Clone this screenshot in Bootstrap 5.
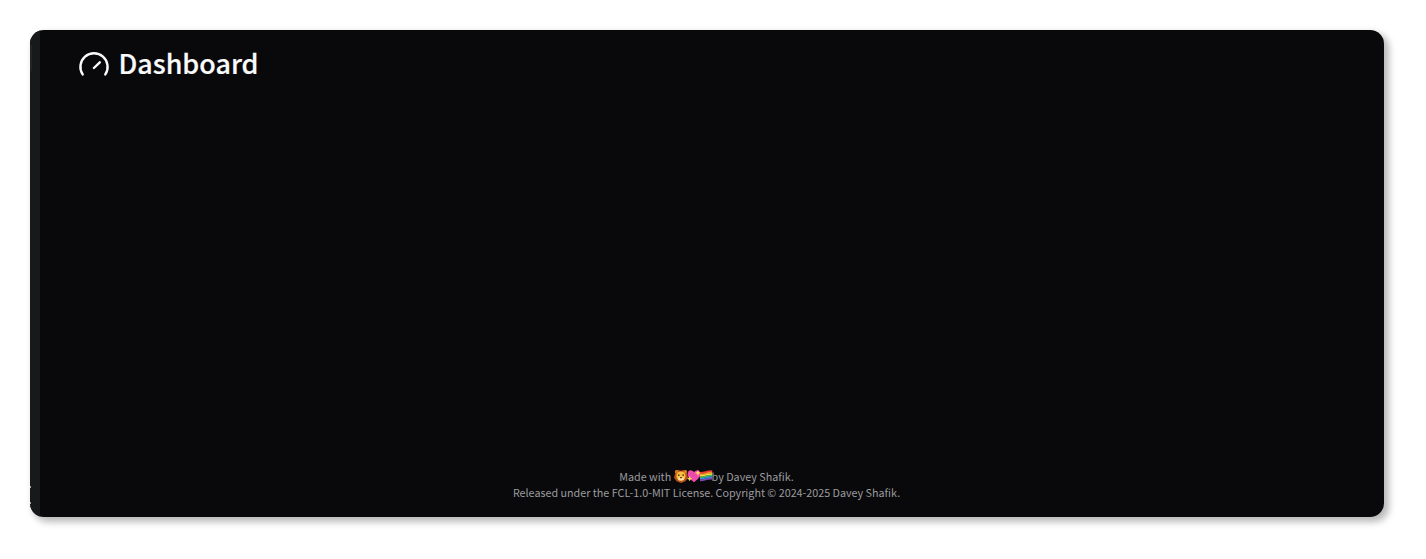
<!DOCTYPE html>
<html lang="en" data-bs-theme="dark">
<head>
<meta charset="utf-8">
<meta name="viewport" content="width=device-width, initial-scale=1">
<title>Dashboard</title>
<link href="https://cdn.jsdelivr.net/npm/bootstrap@5.3.0/dist/css/bootstrap.min.css" rel="stylesheet">
<style>
body{background:#fff;font-family:"Noto Sans CJK SC","Noto Sans",sans-serif;height:559px;padding:30px 42px 42px 30px}
.app-window{background:#09090b;border-radius:14px;box-shadow:4px 4px 7px 1px rgba(0,0,0,.28)}
.side-rail{width:10px;background:#18191b}
.rail-item{width:2px;height:28px;margin-top:14px;background:#222427;border-radius:0 2px 2px 0}
.rail-mark{width:1px;height:2px;background:#aaa}
.page-title{font-size:26.9px;font-weight:500;line-height:36px;color:#fafafa;padding-top:15px;-webkit-text-stroke:.2px #fafafa}
.gauge{width:32px;height:32px;margin-left:38px;margin-right:8.5px}
.page-foot{font-size:10.75px;line-height:16px;color:#9b9b9e;padding:0 11px 16px 0}
.emoji{width:14px;height:14px;vertical-align:-2px;margin-right:-1px}
.emoji-flag{width:13px}
</style>
</head>
<body>
<div class="app-window d-flex h-100 overflow-hidden">
  <aside class="side-rail d-flex flex-column flex-shrink-0">
    <div class="rail-item"></div>
    <div class="rail-mark mt-auto"></div>
    <div class="rail-mark" style="margin-top:14px;margin-bottom:13px"></div>
  </aside>
  <main class="flex-grow-1 d-flex flex-column">
    <h1 class="page-title d-flex align-items-center mb-0">
      <svg class="gauge" viewBox="0 0 32 32" fill="none" stroke="#fafafa" stroke-width="2.4" stroke-linecap="round"><path d="M4.7 27.400A13.6 13.6 0 1 1 27.3 27.400M15.900 21L21.800 15.300"/></svg>
      <span>Dashboard</span>
    </h1>
    <footer class="page-foot mt-auto text-center">
      <div><span>Made with </span><svg class="emoji" viewBox="0 0 16 16"><path d="M2 2l3-1 3 1 3-1 3 1 1 4 1 4-3 4-5 2-5-2-3-4 1-4z" fill="#b65218"/><circle cx="3" cy="3" r="2" fill="#d97a22"/><circle cx="13" cy="3" r="2" fill="#d97a22"/><circle cx="8" cy="8" r="5.2" fill="#fcbd3c"/><ellipse cx="8" cy="11" rx="3.3" ry="2.2" fill="#fbe0a0"/><circle cx="5.5" cy="7" r=".9" fill="#3e2618"/><circle cx="10.5" cy="7" r=".9" fill="#3e2618"/><path d="M6.5 9h3L8 11z" fill="#4a2a1b"/></svg><svg class="emoji" viewBox="0 0 16 16"><path d="M8 15C1 10 0 7 1 4c1-4 6-3 7 0 1-3 6-4 7 0 1 3 0 6-7 11z" fill="#ee4aac"/><path d="M3 8l1 2 2 1-2 1-1 2-1-2-2-1 2-1zM12.500 1l1 2.500 2.500 1-2.500 1-1 2.500-1-2.500-2.500-1 2.500-1z" fill="#ffd85a"/></svg><svg class="emoji emoji-flag" viewBox="0 0 16 16" preserveAspectRatio="none"><g fill="none" stroke-width="1.9"><path d="M0 4.500q4 0 7-1t8-1" stroke="#ed3d3a"/><path d="M0 6.200q4 0 7-1t8-1" stroke="#f98d28"/><path d="M0 7.900q4 0 7-1t8-1" stroke="#ffdc34"/><path d="M0 9.600q4 0 7-1t8-1" stroke="#48b957"/><path d="M0 11.300q4 0 7-1t8-1" stroke="#318dd9"/><path d="M0 13q4 0 7-1t8-1" stroke="#7749ad"/></g></svg><span>by Davey Shafik.</span></div>
      <div>Released under the FCL-1.0-MIT License. Copyright © 2024-2025 Davey Shafik.</div>
    </footer>
  </main>
</div>
<script src="https://cdn.jsdelivr.net/npm/bootstrap@5.3.0/dist/js/bootstrap.bundle.min.js"></script>
</body>
</html>
